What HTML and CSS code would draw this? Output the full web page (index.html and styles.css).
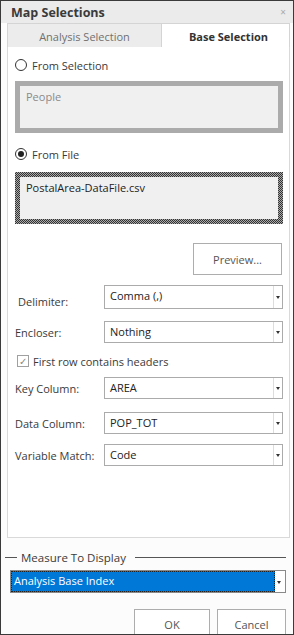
FILE: index.html
```html
<html lang="en">
<head>
    <meta charset="utf-8">
    <title>Map Selections</title>
    <link rel="stylesheet" href="styles.css">
</head>
<body>
<div class="window">
    <div class="titlebar">
        <span class="title">Map Selections</span>
        <span class="close">&times;</span>
    </div>
    <div class="tabs">
        <div class="tab">Analysis Selection</div>
        <div class="tab active">Base Selection</div>
    </div>
    <div class="panel">
        <div class="radio-row first"><span class="radio"></span>From Selection</div>
        <div class="textbox disabled">People</div>
        <div class="radio-row second"><span class="radio checked"></span>From File</div>
        <div class="textbox focused">PostalArea-DataFile.csv</div>
        <div class="preview-row"><button class="btn preview">Preview...</button></div>

        <div class="field delimiter">
            <span class="lbl">Delimiter:</span>
            <div class="combo"><span class="val">Comma (,)</span><span class="arrow"></span></div>
        </div>
        <div class="field encloser">
            <span class="lbl">Encloser:</span>
            <div class="combo"><span class="val">Nothing</span><span class="arrow"></span></div>
        </div>
        <div class="check-row"><span class="check">&#10003;</span>First row contains headers</div>
        <div class="field key">
            <span class="lbl">Key Column:</span>
            <div class="combo"><span class="val">AREA</span><span class="arrow"></span></div>
        </div>
        <div class="field data">
            <span class="lbl">Data Column:</span>
            <div class="combo"><span class="val">POP_TOT</span><span class="arrow"></span></div>
        </div>
        <div class="field variable">
            <span class="lbl">Variable Match:</span>
            <div class="combo"><span class="val">Code</span><span class="arrow"></span></div>
        </div>
    </div>

    <div class="group-head">
        <span class="dash"></span>
        <span class="legend">Measure To Display</span>
        <span class="rule"></span>
    </div>
    <div class="combo measure"><span class="val">Analysis Base Index</span><span class="arrow"></span></div>

    <div class="actions">
        <button class="btn ok">OK</button>
        <button class="btn cancel">Cancel</button>
    </div>
</div>
</body>
</html>
```

FILE: styles.css
```css
* {
    margin: 0;
    padding: 0;
    box-sizing: border-box;
}

body {
    background: #fff;
    color: #3a3a3a;
    font: normal 11px "Open Sans", "Noto Sans", sans-serif;
}

.window {
    width: 294px;
    height: 635px;
    border: 1px solid #3a3a3a;
    background: #fcfcfc;
    overflow: hidden;
}

/* title */
.titlebar {
    height: 22px;
    background: #ebebeb;
    display: flex;
    align-items: center;
    justify-content: space-between;
    padding: 0 7px 0 10px;
}

.title {
    font-size: 12.5px;
    font-weight: 700;
    color: #3a3a3a;
}

.close {
    font-size: 10px;
    color: #aaa;
}

/* tabs */
.tabs {
    display: flex;
    margin: 0 0 0 6px;
    height: 24px;
}

.tab {
    width: 155px;
    border: 1px solid #d4d4d4;
    border-bottom: none;
    background: #ececec;
    color: #707070;
    text-align: center;
    line-height: 25px;
}

.tab.active {
    width: 128px;
    border-left: none;
    background: #fff;
    color: #333;
    font-weight: 700;
    padding-left: 6px;
}

.panel {
    margin-left: 6px;
    width: 283px;
    height: 491px;
    background: #fff;
    border: 1px solid #d9d9d9;
    border-top: none;
    padding: 9px 6px 0 7px;
}

/* radios */
.radio-row {
    display: flex;
    align-items: center;
    height: 18px;
}

.radio-row.second {
    margin-top: 12px;
}

.radio {
    width: 12px;
    height: 12px;
    border: 1px solid #333;
    border-radius: 50%;
    margin-right: 5px;
    position: relative;
}

.radio.checked::after {
    content: "";
    position: absolute;
    left: 2px;
    top: 2px;
    width: 6px;
    height: 6px;
    border-radius: 50%;
    background: #222;
}

.textbox {
    margin-top: 7px;
    width: 268px;
    height: 52px;
    background: #f0f0f0;
    padding: 3px 6px;
    color: #222;
}

.textbox.disabled {
    border: 5px solid #ababab;
    color: #8a8a8a;
}

.textbox.focused {
    margin-top: 9px;
    border: 5px solid transparent;
    background: linear-gradient(#f0f0f0, #f0f0f0) padding-box,
    repeating-conic-gradient(#333 0 25%, #aaa 0 50%) 0 0 / 2px 2px border-box;
}

/* preview */
.preview-row {
    display: flex;
    justify-content: flex-end;
    margin-top: 19px;
    padding-right: 1px;
}

.btn {
    font: inherit;
    background: #fff;
    border: 1px solid #adadad;
    color: #555;
}

.btn.preview {
    width: 89px;
    height: 32px;
}

/* fields */
.field {
    display: flex;
    align-items: center;
    margin-top: 12px;
}

.field.delimiter {
    margin-top: 10px;
}

.field.delimiter .lbl {
    padding: 8px 0 0 3px;
}

.field.key {
    margin-top: 7px;
}

.field.data {
    margin-top: 13px;
}

.field.variable {
    margin-top: 10px;
}

.lbl {
    width: 89px;
}

.combo {
    display: flex;
    width: 179px;
    height: 22px;
    border: 1px solid #ababab;
    background: #fff;
    color: #222;
}

.field.delimiter .combo {
    height: 24px;
}

.combo .val {
    flex: 1;
    padding-left: 5px;
    line-height: 19px;
}

.combo .arrow {
    width: 9px;
    border-left: 1px solid #ddd;
    position: relative;
}

.combo .arrow::after {
    content: "";
    position: absolute;
    left: 2px;
    top: 50%;
    margin-top: -1px;
    border: 2.5px solid transparent;
    border-top: 3px solid #333;
    border-bottom: none;
}

.check-row {
    display: flex;
    align-items: center;
    height: 18px;
    margin-top: 9px;
    padding-left: 2px;
}

.check {
    width: 12px;
    height: 12px;
    border: 1px solid #a0a0a0;
    margin-right: 4px;
    color: #888;
    font-size: 10px;
    line-height: 10px;
    text-align: center;
}

/* measure group */
.group-head {
    display: flex;
    align-items: center;
    margin-top: 12px;
    padding: 0 7px 0 4px;
    height: 14px;
}

.dash {
    width: 12px;
    border-top: 1px solid #555;
}

.legend {
    padding: 0 9px 0 4px;
    font-size: 11.5px;
}

.rule {
    flex: 1;
    border-top: 1px solid #555;
}

.combo.measure {
    margin: 6px 0 0 9px;
    width: 276px;
    height: 23px;
    background: #fff;
    border: 1px solid #8a8a8a;
}

.combo.measure .val {
    background: #0078d7;
    color: #fff;
    outline: 1px dotted #222;
    outline-offset: -1px;
    padding-left: 3px;
    line-height: 20px;
}

.combo.measure .arrow {
    width: 10px;
    border-left: none;
}

/* buttons */
.actions {
    display: flex;
    justify-content: flex-end;
    gap: 7px;
    margin-top: 16px;
    padding-right: 7px;
}

.btn.ok {
    width: 76px;
    height: 30px;
}

.btn.cancel {
    width: 69px;
    height: 30px;
}
```
